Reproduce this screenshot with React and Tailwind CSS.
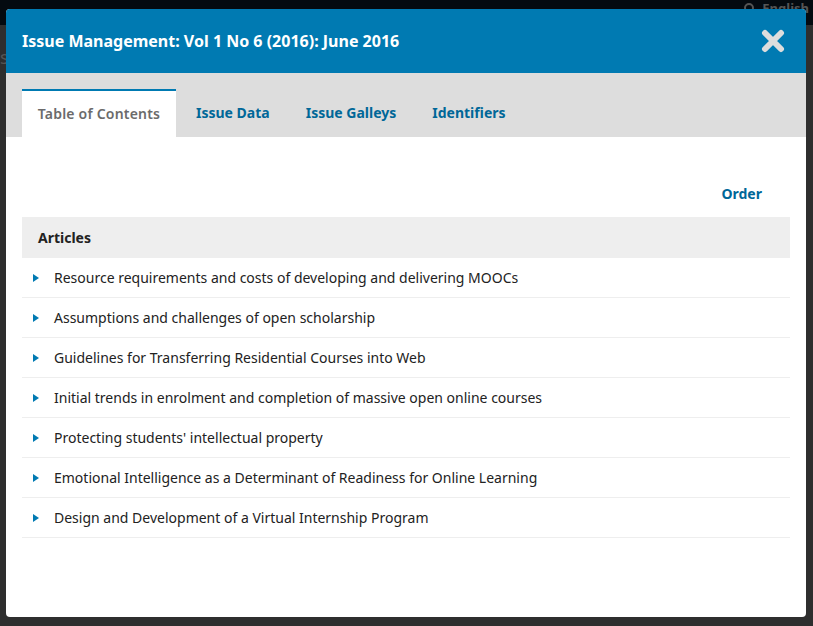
import React from 'react';

const TABS = ['Table of Contents', 'Issue Data', 'Issue Galleys', 'Identifiers'];

const ARTICLES = [
  'Resource requirements and costs of developing and delivering MOOCs',
  'Assumptions and challenges of open scholarship',
  'Guidelines for Transferring Residential Courses into Web',
  'Initial trends in enrolment and completion of massive open online courses',
  "Protecting students' intellectual property",
  'Emotional Intelligence as a Determinant of Readiness for Online Learning',
  'Design and Development of a Virtual Internship Program',
];

const CloseIcon = () => (
  <svg width="24" height="24" viewBox="0 0 24 24" aria-hidden="true">
    <path
      d="M4 4 L20 20 M20 4 L4 20"
      stroke="#dddddd"
      strokeWidth="6"
      strokeLinecap="round"
    />
  </svg>
);

const Caret = () => (
  <svg width="6" height="8" viewBox="0 0 6 8" aria-hidden="true">
    <path d="M0 0 L6 4 L0 8 Z" fill="#007ab2" />
  </svg>
);

export default function App() {
  return (
    <div
      className="relative h-[626px] w-[813px] overflow-hidden bg-[#2e2e2e]"
      style={{ fontFamily: '"Noto Sans", "Open Sans", sans-serif' }}
    >
      {/* page behind the overlay */}
      <div className="flex h-[25px] items-start justify-end bg-[#040a10] pr-1">
        <span className="flex items-center gap-2 text-[13px] font-bold leading-[16px] text-[#555]">
          <span className="inline-block h-[10px] w-[10px] rounded-full border-2 border-[#555]" />
          English
        </span>
      </div>
      <div className="pl-0 pt-[22px] text-[18px] leading-[20px] text-[#555]">ss</div>

      {/* modal */}
      <div className="absolute left-[6px] top-[9px] flex h-[608px] w-[800px] flex-col overflow-hidden rounded-[4px] bg-white">
        <div className="flex h-[64px] items-center justify-between bg-[#007ab2] pl-4 pr-[21px]">
          <h1 className="text-[16px] font-bold text-white">
            Issue Management: Vol 1 No 6 (2016): June 2016
          </h1>
          <button type="button" className="flex items-center">
            <CloseIcon />
          </button>
        </div>

        <div className="flex h-[64px] items-end gap-1 bg-[#dddddd] px-4">
          {TABS.map((tab, i) => (
            <div
              key={tab}
              className={
                i === 0
                  ? 'flex h-[48px] w-[154px] items-center justify-center border-t-2 border-[#007ab2] bg-white pb-[2px] text-[14px] font-semibold tracking-[0.2px] text-[#6b6b6b]'
                  : 'flex h-[48px] items-center px-4 pb-[2px] text-[14px] font-bold text-[#006798]'
              }
            >
              {tab}
            </div>
          ))}
        </div>

        <div className="px-4">
          <div className="flex h-[80px] items-center justify-end pr-7 pt-[43px] pb-[11px]">
            <span className="text-[14px] font-bold text-[#006798]">Order</span>
          </div>
          <div className="flex h-[41px] items-center bg-[#eeeeee] px-4 text-[14px] font-bold text-[#222]">
            Articles
          </div>
          {ARTICLES.map((title) => (
            <div
              key={title}
              className="flex h-[40px] items-center border-b border-[#eeeeee] pl-[11px] text-[14px] text-[#222]"
            >
              <Caret />
              <span className="ml-[15px]">{title}</span>
            </div>
          ))}
        </div>
      </div>
    </div>
  );
}
